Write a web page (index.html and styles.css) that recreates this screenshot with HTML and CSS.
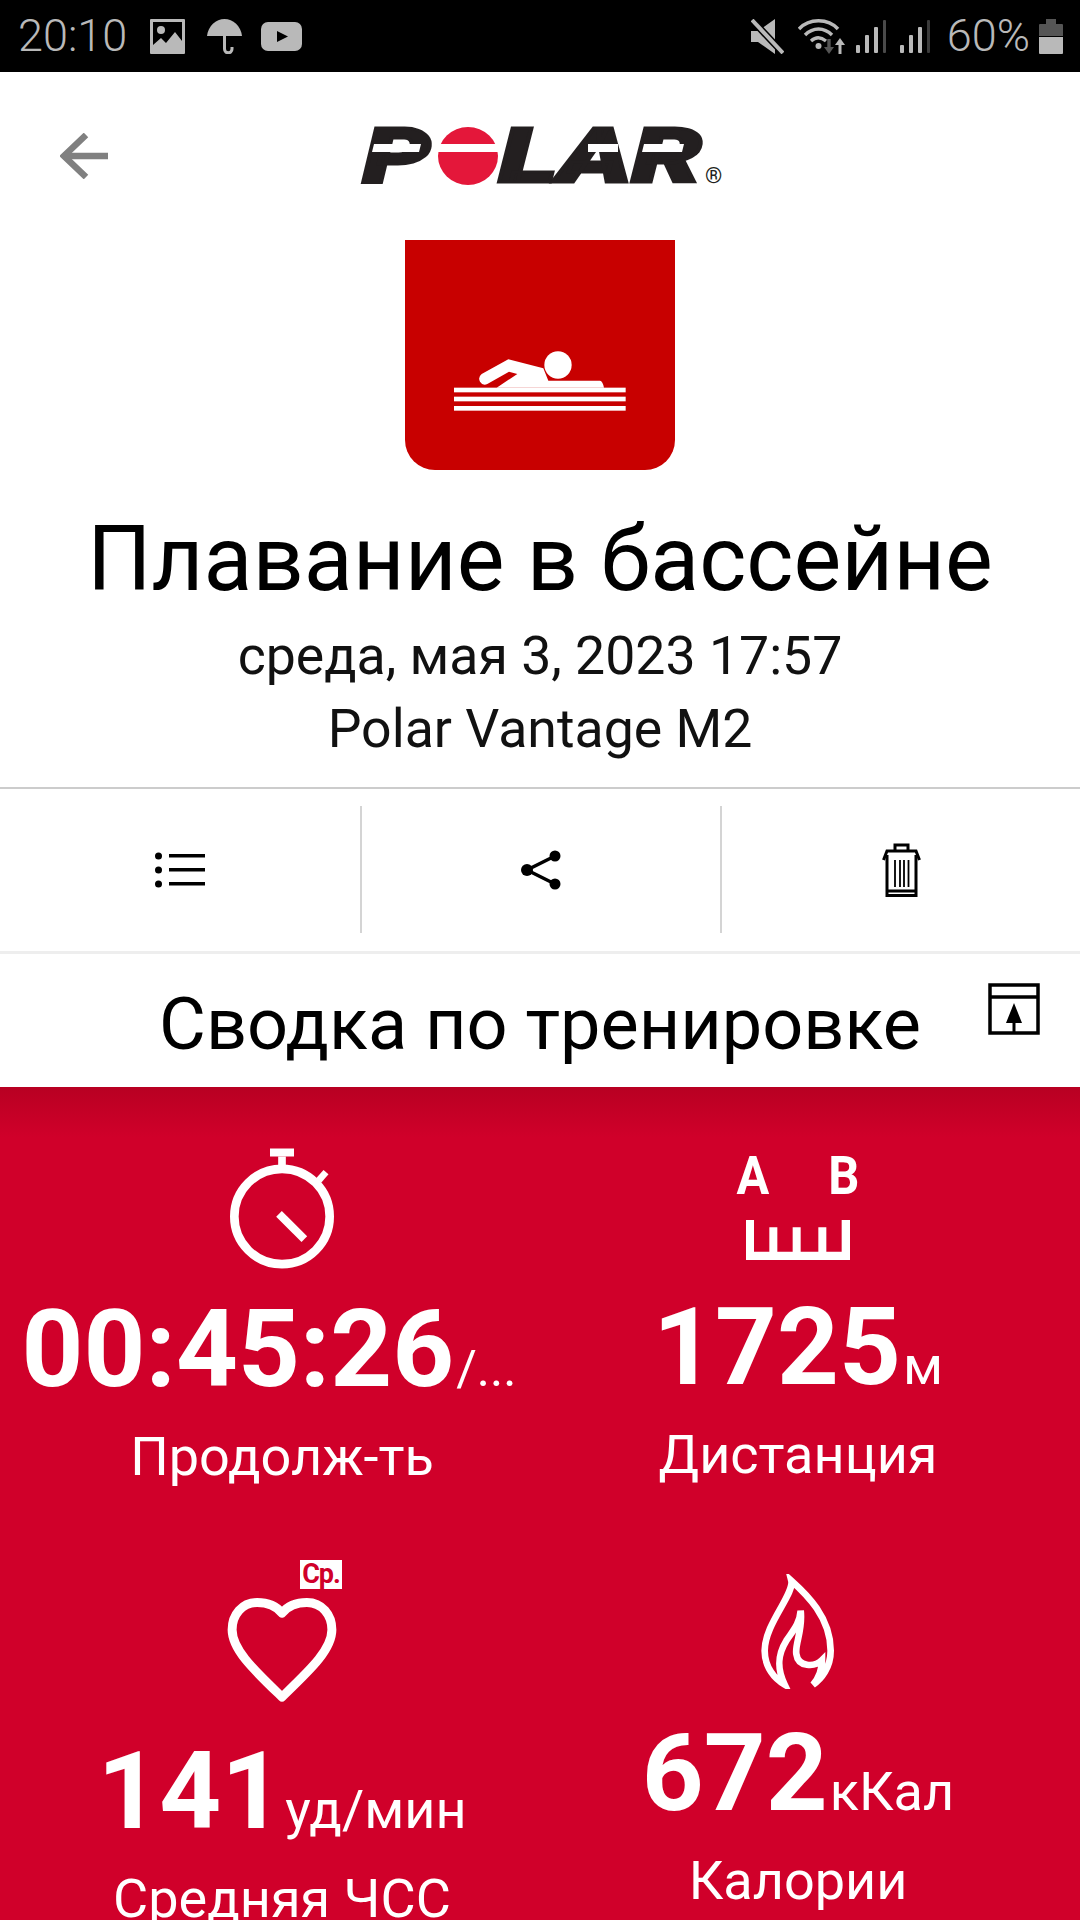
FILE: index.html
```html
<!DOCTYPE html>
<html lang="ru">
<head>
  <meta charset="UTF-8">
  <meta name="viewport" content="width=device-width, initial-scale=1.0">
  <title>Плавание в бассейне</title>
  <link rel="stylesheet" href="styles.css">
</head>
<body>

<!-- Status bar -->
<div class="statusbar">
  <span class="sb-text sb-time">20:10</span>
  <svg class="sb-img" viewBox="0 0 35 35"><path fill="#b9b9b9" fill-rule="evenodd" d="M1 0h33a1 1 0 0 1 1 1v33a1 1 0 0 1-1 1H1a1 1 0 0 1-1-1V1a1 1 0 0 1 1-1zM3 3v23l8-7 5 5 9-11 7 9V3z"/><circle cx="11" cy="11" r="4" fill="#b9b9b9"/></svg>
  <svg class="sb-umbrella" viewBox="0 0 35 35"><path fill="#b9b9b9" d="M0 17C1 7 9 0 17.500 0S34 7 35 17z"/><path fill="none" stroke="#b9b9b9" stroke-width="3" d="M17.500 15v15c0 5 7.500 5 7.500 0v-2"/></svg>
  <svg class="sb-yt" viewBox="0 0 41 29"><rect width="41" height="29" rx="7" fill="#b9b9b9"/><path fill="#000" d="M16 9l11 5.500-11 5.500z"/></svg>
  <span class="sb-spacer"></span>
  <svg class="sb-mute" viewBox="0 0 33 35"><path fill="#b9b9b9" d="M0 12h7L24 0v35L7 23H0z"/><path stroke="#000" stroke-width="7" d="M0 0l33 35"/><path stroke="#b9b9b9" stroke-width="4" d="M1 1l31 33"/></svg>
  <svg class="sb-wifi" viewBox="0 0 47 35" fill="none">
    <g stroke="#b9b9b9" stroke-width="3.400"><path d="M1 10C11 -1 30 -1 40 10"/><path d="M7 16c8-8 19-8 27 0"/><path d="M13 22c4.500-4 10-4 15 0"/></g>
    <circle cx="20.500" cy="27" r="3" fill="#b9b9b9"/>
    <path stroke="#555" stroke-width="3.400" d="M31 20v12"/><path fill="#555" d="M26 28h10l-5 7z"/>
    <path stroke="#b9b9b9" stroke-width="3" d="M42 25v10"/><path fill="#b9b9b9" d="M37 26h10l-5-7z"/>
  </svg>
  <svg class="sb-signal" viewBox="0 0 30 33"><rect x="0" y="25" width="4" height="8" rx="1" fill="#b9b9b9"/><rect x="9" y="15" width="4" height="18" rx="1" fill="#b9b9b9"/><rect x="18" y="7" width="4" height="26" rx="1" fill="#b9b9b9"/><rect x="27" y="0" width="3" height="33" rx="1" fill="#4a4a4a"/></svg>
  <svg class="sb-signal sb-signal2" viewBox="0 0 30 33"><rect x="0" y="25" width="4" height="8" rx="1" fill="#b9b9b9"/><rect x="9" y="15" width="4" height="18" rx="1" fill="#b9b9b9"/><rect x="18" y="7" width="4" height="26" rx="1" fill="#b9b9b9"/><rect x="27" y="0" width="3" height="33" rx="1" fill="#3a3a3a"/></svg>
  <span class="sb-text sb-pct">60%</span>
  <svg class="sb-battery" viewBox="0 0 24 35"><path fill="#555" d="M7 0h10v5h6a1 1 0 0 1 1 1v11H0V6a1 1 0 0 1 1-1h6z"/><path fill="#b9b9b9" d="M0 18h24v16a1 1 0 0 1-1 1H1a1 1 0 0 1-1-1z"/></svg>
</div>

<!-- Header -->
<div class="header">
  <svg class="back" viewBox="0 0 48 46" fill="none" stroke="#808080"><path stroke-width="6.500" d="M3 23h45"/><path stroke-width="6.500" d="M26 2L4 23l22 21"/></svg>
  <div class="logo">
    <span class="logo-p">P</span>
    <span class="logo-o"></span>
    <span class="logo-lar">LAR</span>
    <span class="logo-reg">®</span>
    <i class="slit slit-p"></i>
    <i class="slit slit-o"></i>
    <i class="slit slit-a"></i>
    <i class="slit slit-r"></i>
  </div>
</div>

<div class="badge-wrap">
  <svg class="badge" viewBox="75 60 810 690">
    <path fill="#c80000" d="M75 60h810v600a90 90 0 0 1-90 90H165a90 90 0 0 1-90-90z"/>
    <circle cx="534" cy="435" r="41" fill="#fff"/>
    <path fill="#fff" d="M385 418L490 445L505 482L660 482Q668 483 672 503L350 503L412 462L387 455L322 492Q308 498 300 485Q293 472 305 462Z"/>
    <rect x="222" y="503" width="515" height="14" fill="#fff"/>
    <rect x="222" y="530" width="515" height="14" fill="#fff"/>
    <rect x="222" y="558" width="515" height="14" fill="#fff"/>
  </svg>
</div>

<div class="info">
  <h1 class="title">Плавание в бассейне</h1>
  <p class="meta">среда, мая 3, 2023 17:57</p>
  <p class="meta">Polar Vantage M2</p>
</div>

<!-- Toolbar -->
<div class="toolbar">
  <div class="tool">
    <svg class="ic-list" viewBox="0 0 50 36"><circle cx="3.500" cy="4" r="3.500"/><circle cx="3.500" cy="18" r="3.500"/><circle cx="3.500" cy="32" r="3.500"/><rect x="14" y="2" width="36" height="3.500"/><rect x="14" y="16" width="36" height="3.500"/><rect x="14" y="30" width="36" height="3.500"/></svg>
  </div>
  <div class="tool">
    <svg class="ic-share" viewBox="0 0 40 40"><path fill="none" stroke="#000" stroke-width="3.500" d="M34 6L6 20l28 14"/><circle cx="34" cy="6" r="5.500"/><circle cx="6" cy="20" r="6"/><circle cx="34" cy="34" r="5.500"/></svg>
  </div>
  <div class="tool">
    <svg class="ic-trash" viewBox="0 0 39 54" fill="none" stroke="#000" stroke-width="3"><path d="M13 8V2h13v6M1.500 17L5 8h29l3.500 9"/><path d="M5 12v40.500h29V12M5 48h29"/><path stroke-width="1.800" d="M13 17v27M18 17v27M22 17v27M26.500 17v27"/></svg>
  </div>
</div>

<!-- Summary heading -->
<div class="summary">
  <h2 class="summary-title">Сводка по тренировке</h2>
  <svg class="ic-export" viewBox="0 0 52 52" fill="none" stroke="#000" stroke-width="3.500"><rect x="2" y="2" width="48" height="48"/><path d="M2 14h48"/><path stroke-width="3" d="M26 38v12"/><path fill="#000" stroke="none" d="M26 20l8 20H18z"/></svg>
</div>

<!-- Stats -->
<div class="stats">
  <div class="stat stat-time">
    <svg class="ic-watch" viewBox="150 50 312 365" fill="none" stroke="#fff">
      <circle cx="306" cy="258" r="143" stroke-width="26"/>
      <path stroke-width="24" d="M270 66h72"/><path stroke-width="23" d="M306 78v28"/>
      <path stroke-width="20" d="M416 150l22-25"/><path stroke-width="24" d="M297 250l76 76"/>
    </svg>
    <div class="value value-clip"><b>00:45:26</b><span class="unit unit-clip">/...</span></div>
    <div class="label">Продолж-ть</div>
  </div>
  <div class="stat stat-dist">
    <div class="dist-icon">
      <div class="dist-letters"><span>A</span><span>B</span></div>
      <svg class="ic-ruler" viewBox="138 210 312 120"><path fill="#fff" d="M138 210h24v95h46v-73h24v73h46v-73h24v73h53v-73h24v73h46v-95h25v120H138z"/></svg>
    </div>
    <div class="value"><b>1725</b><span class="unit">м</span></div>
    <div class="label">Дистанция</div>
  </div>
  <div class="stat stat-hr">
    <div class="heart-icon">
      <svg class="ic-heart" viewBox="65 30 360 430">
        <path fill="none" stroke="#fff" stroke-width="27" stroke-linejoin="round" d="M245 190C225 165 195 158 170 158C125 158 95 195 95 240C95 300 160 360 245 442C330 360 395 300 395 240C395 195 365 158 320 158C295 158 265 165 245 190Z"/>
      </svg>
      <span class="heart-tag">Ср.</span>
    </div>
    <div class="value"><b>141</b><span class="unit">уд/мин</span></div>
    <div class="label">Средняя ЧСС</div>
  </div>
  <div class="stat stat-cal">
    <svg class="ic-flame" viewBox="80 40 240 345" fill="none" stroke="#fff" stroke-width="20" stroke-linejoin="miter">
      <path d="M180 60C225 100 298 170 298 270C298 320 270 355 245 372C260 355 272 330 272 298C250 320 200 320 195 280C190 250 215 210 208 150C205 190 185 210 165 240C140 280 135 320 160 372C130 355 100 320 100 270C100 190 190 100 180 60Z"/>
    </svg>
    <div class="value"><b>672</b><span class="unit">кКал</span></div>
    <div class="label">Калории</div>
  </div>
</div>

</body>
</html>
```

FILE: styles.css
```css
/* General */
html, body {
  margin: 0;
  height: 1920px;
  overflow: hidden;
}
body {
  background: #fff;
  color: #000;
  font-family: 'Roboto', sans-serif;
  width: 1080px;
}
h1, h2, p {
  margin: 0;
  font-weight: 400;
}

/* Status bar */
.statusbar {
  display: flex;
  align-items: center;
  height: 72px;
  background: #000;
  padding: 0 17px 0 18px;
  box-sizing: border-box;
}
.sb-text {
  color: #b9b9b9;
  font-size: 45px;
  font-weight: 300;
  line-height: 72px;
}
.sb-spacer { flex: 1; }
.sb-img { width: 35px; height: 35px; margin-left: 23px; }
.sb-umbrella { width: 35px; height: 35px; margin-left: 22px; }
.sb-yt { width: 41px; height: 29px; margin-left: 19px; }
.sb-mute { width: 33px; height: 35px; }
.sb-wifi { width: 47px; height: 35px; margin-left: 14px; }
.sb-signal { width: 30px; height: 33px; margin-left: 11px; }
.sb-signal2 { margin-left: 14px; }
.sb-pct { margin-left: 17px; }
.sb-battery { width: 24px; height: 35px; margin-left: 9px; }

/* Header */
.header {
  display: flex;
  align-items: center;
  justify-content: center;
  position: relative;
  height: 168px;
}
.back {
  position: absolute;
  left: 60px;
  top: 61px;
  width: 48px;
  height: 46px;
}

/* Logo: real text, stretched to the wide letterforms */
.logo {
  position: relative;
  display: flex;
  align-items: center;
  width: 360px;
  height: 58px;
  margin-top: -1px;
  color: #231f20;
  font-size: 76px;
  font-weight: 900;
  font-style: italic;
  line-height: 58px;
  -webkit-text-stroke: 3px #231f20;
}
.logo-p {
  margin-left: 3px;
  transform: scaleX(1.4);
  transform-origin: left center;
}
.logo-o {
  position: absolute;
  left: 78px;
  top: 0;
  width: 60px;
  height: 58px;
  border-radius: 50%;
  background: #e4173a;
}
.logo-lar {
  position: absolute;
  left: 139px;
  top: 0;
  transform: scaleX(1.46);
  transform-origin: left center;
}
.logo-reg {
  position: absolute;
  left: 345px;
  top: 38px;
  color: #231f20;
  font-size: 22px;
  font-weight: 400;
  font-style: normal;
  line-height: 22px;
  -webkit-text-stroke: 0;
}
.slit {
  position: absolute;
  top: 17px;
  height: 8px;
  background: #fff;
}
.slit-p { left: 13px; width: 47px; transform: skewX(-14deg); }
.slit-o { left: 76px; width: 64px; }
.slit-a { left: 228px; width: 30px; }
.slit-r { left: 283px; width: 40px; transform: skewX(-14deg); }

.badge-wrap {
  display: flex;
  justify-content: center;
}
.badge {
  width: 270px;
  height: 230px;
}

/* Title block */
.info {
  text-align: center;
  padding-top: 40px;
  height: 317px;
  box-sizing: border-box;
}
.title {
  font-size: 90px;
  line-height: 100px;
  margin-bottom: 9px;
}
.meta {
  font-size: 53.600px;
  line-height: 73px;
  color: #111;
}

/* Toolbar */
.toolbar {
  display: grid;
  grid-template-columns: 362px 360px 358px;
  height: 167px;
  padding: 17px 0 18px;
  box-sizing: border-box;
  border-top: 2px solid #ccc;
  border-bottom: 3px solid #eee;
}
.tool {
  display: flex;
  align-items: center;
  justify-content: center;
  border-right: 2px solid #d4d4d4;
}
.tool:last-child { border-right: 0; }
.ic-list { width: 50px; height: 36px; }
.ic-share { width: 40px; height: 40px; }
.ic-trash { width: 39px; height: 54px; }

/* Summary heading */
.summary {
  position: relative;
  height: 133px;
  padding-top: 8px;
  box-sizing: border-box;
  display: flex;
  align-items: center;
  justify-content: center;
}
.summary-title {
  font-size: 72px;
  line-height: 100px;
}
.ic-export {
  position: absolute;
  right: 40px;
  top: 29px;
  width: 52px;
  height: 52px;
}

/* Stats */
.stats {
  display: grid;
  grid-template-columns: 516px 516px;
  grid-auto-rows: 473px;
  height: 833px;
  padding: 0 24px;
  background: linear-gradient(#b80022 0, #d0002a 50px);
  color: #fff;
}
.stat {
  display: flex;
  flex-direction: column;
  align-items: center;
  min-width: 0;
}
.value {
  white-space: nowrap;
  line-height: 92px;
}
.value-clip {
  padding-right: 26px;
}
.value b {
  font-size: 108px;
  font-weight: 700;
}
.unit {
  font-size: 54px;
  margin-left: 2px;
}
.unit-clip {
  font-size: 50px;
}
.label {
  font-size: 54px;
  line-height: 60px;
  color: #fff;
  white-space: nowrap;
}
.ic-watch { width: 104px; height: 122px; margin-top: 60px; margin-bottom: 34px; }

.dist-icon {
  display: flex;
  flex-direction: column;
  align-items: center;
  width: 126px;
  margin-top: 70px;
  margin-bottom: 41px;
}
.dist-letters {
  display: flex;
  justify-content: space-between;
  align-self: stretch;
  font-size: 53px;
  font-weight: 700;
  line-height: 38px;
  margin-bottom: 25px;
}
.dist-letters span {
  transform: scaleX(.92);
}
.ic-ruler { display: block; width: 104px; height: 40px; }

.heart-icon {
  position: relative;
  width: 120px;
  height: 143px;
  margin-bottom: 42px;
}
.ic-heart { display: block; width: 120px; height: 143px; }
.heart-tag {
  position: absolute;
  top: 0;
  right: 0;
  width: 42px;
  height: 29px;
  background: #fff;
  color: #d0002a;
  font-size: 27px;
  font-weight: 700;
  letter-spacing: -1px;
  line-height: 29px;
  text-align: center;
}
.ic-flame { width: 80px; height: 115px; margin-top: 14px; margin-bottom: 38px; }
```
